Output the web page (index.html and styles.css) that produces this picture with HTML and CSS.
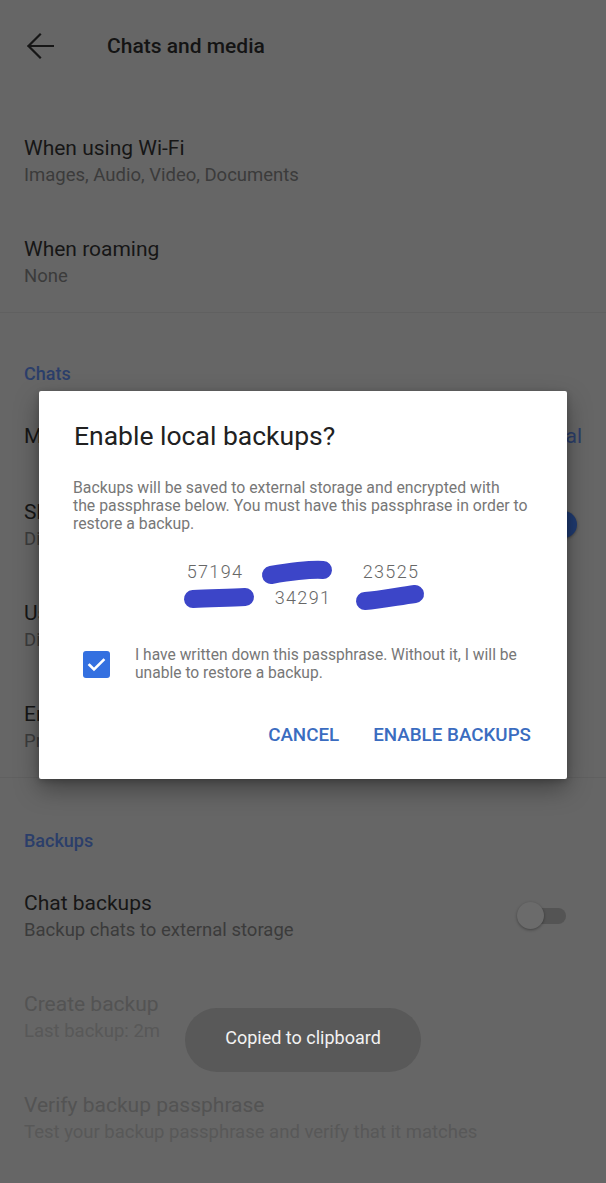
FILE: index.html
```html
<!DOCTYPE html>
<html lang="en">
<head>
<meta charset="utf-8">
<title>Chats and media</title>
<link rel="stylesheet" href="styles.css">
</head>
<body>
<div class="screen">
  <header class="toolbar">
    <svg class="back" viewBox="0 0 28 28" width="28" height="28" aria-hidden="true">
      <path d="M27 14H2.5M14 2.5L2.5 14L14 25.5" fill="none" stroke="#161616" stroke-width="2.2" stroke-linecap="square"/>
    </svg>
    <h1 class="toolbar-title">Chats and media</h1>
  </header>

  <section class="section first">
    <div class="pref">
      <div class="pref-text">
        <div class="pref-title">When using Wi-Fi</div>
        <div class="pref-summary">Images, Audio, Video, Documents</div>
      </div>
    </div>
    <div class="pref">
      <div class="pref-text">
        <div class="pref-title">When roaming</div>
        <div class="pref-summary">None</div>
      </div>
    </div>
  </section>

  <div class="divider"></div>

  <section class="section">
    <div class="category">Chats</div>
    <div class="pref single">
      <div class="pref-text">
        <div class="pref-title">Message font size</div>
      </div>
      <div class="pref-value">Normal</div>
    </div>
    <div class="pref">
      <div class="pref-text">
        <div class="pref-title">Show invitation prompts</div>
        <div class="pref-summary">Display invitation prompts for contacts</div>
      </div>
      <div class="switch on"><span class="track"></span><span class="knob"></span></div>
    </div>
    <div class="pref">
      <div class="pref-text">
        <div class="pref-title">Use system emoji</div>
        <div class="pref-summary">Disable built-in emoji support</div>
      </div>
    </div>
    <div class="pref">
      <div class="pref-text">
        <div class="pref-title">Enter key sends</div>
        <div class="pref-summary">Pressing the Enter key will send text messages</div>
      </div>
    </div>
  </section>

  <div class="divider"></div>

  <section class="section">
    <div class="category lower">Backups</div>
    <div class="pref">
      <div class="pref-text">
        <div class="pref-title">Chat backups</div>
        <div class="pref-summary">Backup chats to external storage</div>
      </div>
      <div class="switch"><span class="track"></span><span class="knob"></span></div>
    </div>
    <div class="pref disabled">
      <div class="pref-text">
        <div class="pref-title">Create backup</div>
        <div class="pref-summary">Last backup: 2m</div>
      </div>
    </div>
    <div class="pref disabled">
      <div class="pref-text">
        <div class="pref-title">Verify backup passphrase</div>
        <div class="pref-summary">Test your backup passphrase and verify that it matches</div>
      </div>
    </div>
  </section>

  <div class="dialog" role="dialog">
    <h2 class="dialog-title">Enable local backups?</h2>
    <p class="dialog-body">Backups will be saved to external storage and encrypted with<br>the passphrase below. You must have this passphrase in order to<br>restore a backup.</p>
    <div class="passphrase">
      <span class="code">57194</span>
      <span class="code redacted"><svg viewBox="0 0 88 26" width="88" height="26"><path d="M12 16 C30 13, 48 10, 64 11" /></svg></span>
      <span class="code">23525</span>
      <span class="code redacted"><svg viewBox="0 0 88 26" width="88" height="26"><path d="M22 14 C40 13, 58 13, 74 12" /></svg></span>
      <span class="code">34291</span>
      <span class="code redacted"><svg viewBox="0 0 88 26" width="88" height="26"><path d="M18 16 C34 15, 52 11, 68 9" /></svg></span>
    </div>
    <label class="confirm">
      <span class="checkbox">
        <svg viewBox="0 0 27 27" width="27" height="27"><path d="M6.5 14l4.5 4.5 9.5-9.5" fill="none" stroke="#fff" stroke-width="2.6" stroke-linecap="square"/></svg>
      </span>
      <span class="confirm-text">I have written down this passphrase. Without it, I will be unable to restore a backup.</span>
    </label>
    <div class="actions">
      <button class="btn">CANCEL</button>
      <button class="btn">ENABLE BACKUPS</button>
    </div>
  </div>

  <div class="toast">Copied to clipboard</div>
</div>
</body>
</html>
```

FILE: styles.css
```css
* { box-sizing: border-box; }

html, body {
  margin: 0;
  padding: 0;
  background: #666666;
}

body {
  font-family: Roboto, "Noto Sans", "Liberation Sans", sans-serif;
  color: #161616;
}

.screen {
  position: relative;
  width: 606px;
  height: 1183px;
  overflow: hidden;
  background: #666666;
}

.toolbar {
  display: flex;
  align-items: center;
  height: 92px;
  padding-left: 26px;
}

.back { display: block; }

.toolbar-title {
  margin: 0 0 0 53px;
  font-size: 21px;
  font-weight: 500;
  color: #141414;
  line-height: 28px;
}

.section.first { margin-top: 18px; }

.divider {
  height: 1px;
  background: #606060;
}

.category {
  padding: 50px 24px 13px;
  font-size: 18px;
  line-height: 22px;
  font-weight: 500;
  color: #2b3e6a;
}

.category.lower { padding-top: 52px; }

.pref {
  display: flex;
  align-items: center;
  padding: 25px 24px;
  white-space: nowrap;
}

.pref-text { flex: 1; min-width: 0; }

.pref-title {
  font-size: 21px;
  line-height: 26px;
  color: #161616;
}

.pref-summary {
  margin-top: 3px;
  font-size: 18.5px;
  line-height: 22px;
  color: #3b3b3b;
}

.pref-value {
  font-size: 21px;
  line-height: 26px;
  color: #2b3e6a;
}

.pref.disabled .pref-title { color: #535353; }
.pref.disabled .pref-summary { color: #585858; }

.switch {
  position: relative;
  width: 49px;
  height: 28px;
  margin-right: 16px;
  flex: none;
}

.switch .track {
  position: absolute;
  left: 13px;
  right: 0;
  top: 6px;
  height: 16px;
  border-radius: 8px;
  background: #545454;
}

.switch .knob {
  position: absolute;
  left: 0;
  top: 0;
  width: 27px;
  height: 27px;
  border-radius: 50%;
  background: #6b6b6b;
  box-shadow: 0 1px 3px rgba(0, 0, 0, 0.35);
}

.switch.on .track { background: #3b4f78; }
.switch.on .knob { left: 33px; background: #1f3a70; }

/* Dialog */
.dialog {
  position: absolute;
  left: 39px;
  top: 391px;
  width: 528px;
  height: 388px;
  background: #ffffff;
  border-radius: 2px;
  padding: 29px 36px 0 34px;
  box-shadow: 0 10px 24px rgba(0, 0, 0, 0.35), 0 2px 6px rgba(0, 0, 0, 0.2);
}

.dialog-title {
  margin: 0;
  font-size: 26.5px;
  font-weight: 400;
  line-height: 32px;
  color: #212121;
  padding-left: 1px;
}

.dialog-body {
  margin: 27px -10px 0 0;
  font-size: 15.8px;
  line-height: 18px;
  color: #777777;
  white-space: nowrap;
}

.passphrase {
  display: grid;
  grid-template-columns: repeat(3, 88px);
  grid-auto-rows: 26px;
  justify-content: center;
  margin: 26px 0 0 0;
  padding-left: 2px;
}

.code {
  position: relative;
  text-align: center;
  font-size: 18px;
  font-weight: 300;
  letter-spacing: 1.3px;
  line-height: 26px;
  color: #676767;
}

.code.redacted svg {
  position: absolute;
  left: 0;
  top: 0;
  overflow: visible;
}

.code.redacted path {
  fill: none;
  stroke: #3c45c8;
  stroke-width: 18;
  stroke-linecap: round;
}

.confirm {
  display: flex;
  align-items: center;
  margin-top: 35px;
  padding-left: 10px;
}

.checkbox {
  flex: none;
  width: 27px;
  height: 27px;
  border-radius: 3px;
  background: #3470e0;
}

.checkbox svg { display: block; }

.confirm-text {
  margin-left: 25px;
  font-size: 15.6px;
  line-height: 18px;
  color: #777777;
}

.actions {
  display: flex;
  justify-content: flex-end;
  gap: 34px;
  margin-top: 41px;
}

.btn {
  border: 0;
  background: none;
  padding: 0;
  font-family: Roboto, "Noto Sans", "Liberation Sans", sans-serif;
  font-size: 18.8px;
  font-weight: 500;
  line-height: 24px;
  color: #3a6cc0;
}

/* Toast */
.toast {
  position: absolute;
  left: 185px;
  top: 1008px;
  width: 236px;
  height: 64px;
  padding-bottom: 6px;
  border-radius: 32px;
  background: #595959;
  color: #f2f2f2;
  font-size: 18px;
  display: flex;
  align-items: center;
  justify-content: center;
}
```
